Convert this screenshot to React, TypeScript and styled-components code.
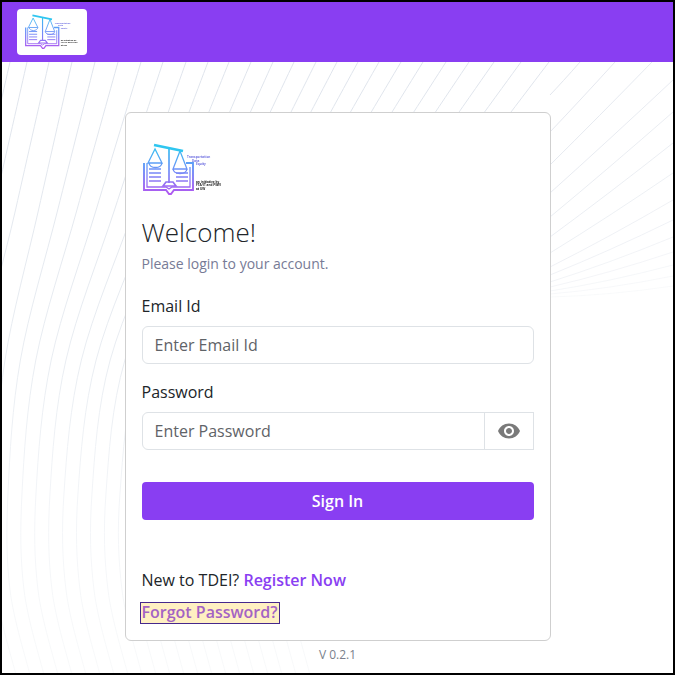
import styled, { createGlobalStyle } from "styled-components";

const GlobalStyle = createGlobalStyle`
  html, body {
    margin: 0;
    padding: 0;
    background: #000;
  }
  * {
    box-sizing: border-box;
  }
`;

const PURPLE = "#893ef2";

const TOP_STARTS = [
  -36, -13, 10, 27, 49, 72, 95, 118, 141, 163, 186, 208, 229, 251, 273, 294, 316, 337, 358, 379, 401, 423, 446, 469, 494,
  521, 549,
];

// smooth curve through points (catmull-rom turned into beziers)
function smoothPath(pts: number[][]) {
  let d = `M${pts[0][0]} ${pts[0][1]}`;
  for (let i = 0; i < pts.length - 1; i++) {
    const p0 = pts[Math.max(i - 1, 0)];
    const p1 = pts[i];
    const p2 = pts[i + 1];
    const p3 = pts[Math.min(i + 2, pts.length - 1)];
    const c1 = [p1[0] + (p2[0] - p0[0]) / 6, p1[1] + (p2[1] - p0[1]) / 6];
    const c2 = [p2[0] - (p3[0] - p1[0]) / 6, p2[1] - (p3[1] - p1[1]) / 6];
    d += ` C${c1[0]} ${c1[1]} ${c2[0]} ${c2[1]} ${p2[0]} ${p2[1]}`;
  }
  return d;
}

// the long contour lines: lean left, bulge at y~540, come back right at the bottom
function contourLine(x0: number, i: number) {
  const at360 = x0 - 67 - Math.max(0, x0 - 72) * 0.33;
  const at210 = x0 + (at360 - x0) * 0.5;
  const at493 = 8 + (i - 6) * 14;
  return smoothPath([
    [x0, 62],
    [at210, 210],
    [at360, 360],
    [at493, 493],
    [at493 + 2, 590],
    [at493 + 22, 675],
  ]);
}

const FAN_LINES = [
  [580, 62, 550, 95],
  [615, 62, 550, 132],
  [652, 62, 550, 165],
  [673, 80, 550, 193],
  [673, 112, 550, 217],
  [673, 143, 550, 237],
  [673, 173, 550, 253],
  [673, 200, 550, 267],
  [673, 220, 550, 275],
  [673, 237, 550, 282],
  [673, 252, 550, 287],
  [673, 265, 550, 291],
  [673, 276, 550, 294],
  [673, 286, 550, 297],
];

export default function App() {
  return (
    <Page>
      <GlobalStyle />
      <Background viewBox="0 0 675 675" aria-hidden="true">
        <defs>
          <linearGradient id="contour" gradientUnits="userSpaceOnUse" x1="0" y1="62" x2="0" y2="675">
            <stop offset="0" stopColor="#dfe4ec" />
            <stop offset="0.5" stopColor="#e9edf2" />
            <stop offset="0.72" stopColor="#f3f5f8" />
            <stop offset="1" stopColor="#f8f9fa" />
          </linearGradient>
        </defs>
        {TOP_STARTS.map((x0, i) => (
          <path key={x0} d={contourLine(x0, i)} stroke="url(#contour)" fill="none" />
        ))}
        {FAN_LINES.map(([x1, y1, x2, y2], i) => (
          <path
            key={i}
            d={`M${x1} ${y1} Q${(x1 + x2) / 2 - 3} ${(y1 + y2) / 2 + 4} ${x2} ${y2}`}
            stroke="#e3e7ee"
            strokeOpacity={1 - i * 0.06}
            fill="none"
          />
        ))}
      </Background>
      <Header>
        <LogoBox>
          <Logo width={54} />
        </LogoBox>
      </Header>
      <Main>
        <Card>
          <CardLogo>
            <Logo width={80} />
          </CardLogo>
          <Title>Welcome!</Title>
          <Subtitle>Please login to your account.</Subtitle>
          <Label>Email Id</Label>
          <Field>
            <Input placeholder="Enter Email Id" />
          </Field>
          <Label $gap>Password</Label>
          <Field>
            <Input placeholder="Enter Password" $joined />
            <EyeButton type="button" aria-label="Show password">
              <svg width="24" height="24" viewBox="0 0 24 24" fill="#7a7a7a">
                <path d="M12 4.5C7 4.5 2.73 7.61 1 12c1.73 4.39 6 7.5 11 7.5s9.27-3.11 11-7.5c-1.73-4.39-6-7.5-11-7.5zM12 17c-2.76 0-5-2.24-5-5s2.24-5 5-5 5 2.24 5 5-2.24 5-5 5zm0-8c-1.66 0-3 1.34-3 3s1.34 3 3 3 3-1.34 3-3-1.34-3-3-3z" />
              </svg>
            </EyeButton>
          </Field>
          <SignIn type="button">Sign In</SignIn>
          <Register>
            New to TDEI? <PurpleLink href="#">Register Now</PurpleLink>
          </Register>
          <Forgot href="#">Forgot Password?</Forgot>
        </Card>
        <Version>V 0.2.1</Version>
      </Main>
    </Page>
  );
}

function Logo({ width }: { width: number }) {
  return (
    <LogoSvg width={width} viewBox="0 0 80 54">
      <defs>
        <linearGradient id="logoGrad" gradientUnits="userSpaceOnUse" x1="0" y1="2" x2="0" y2="52">
          <stop offset="0" stopColor="#2fc6f0" />
          <stop offset="0.5" stopColor="#6f8ff8" />
          <stop offset="1" stopColor="#b455f0" />
        </linearGradient>
      </defs>
      <g fill="none" stroke="url(#logoGrad)" strokeWidth="1.9">
        <path d="M1 20v27h22l3 4h2l3-4h19V20h-7" />
        <path d="M4 20v24h19l3 2 3-2h18V24" strokeWidth="1.3" />
        <path d="M26 5v35M20 43l3-4h7l3 4z" strokeWidth="1.7" />
        <path d="M6 26h12M6 30h12M6 34h12M6 38h12M33 30h12M33 34h12M33 38h12" strokeWidth="1.4" />
        <path d="M12 6L5 20h14zM6 20c1 6 12 6 13 0" strokeWidth="1.3" />
        <path d="M37 8L30 26h14zM30 26c1 6 13 6 14 0" strokeWidth="1.3" />
      </g>
      <path d="M11 2l29 6" stroke="#2fc6f0" strokeWidth="2.8" fill="none" />
      <LogoText x="44" y="15" fill="#6f6fe0">
        Transportation
      </LogoText>
      <LogoText x="49" y="18.5" fill="#6f6fe0">
        Data
      </LogoText>
      <LogoText x="53" y="22" fill="#6f6fe0">
        Equity
      </LogoText>
      <LogoText x="53" y="40" fill="#222">
        an initiative by
      </LogoText>
      <LogoText x="53" y="43" fill="#222">
        FTA/IT and PSWI
      </LogoText>
      <LogoText x="53" y="47" fill="#222">
        at UW
      </LogoText>
    </LogoSvg>
  );
}

const Page = styled.div`
  position: relative;
  width: 675px;
  height: 675px;
  border: 2px solid #000;
  background: #fff;
  overflow: hidden;
  font-family: "Open Sans", "Noto Sans", sans-serif;
`;

const Background = styled.svg`
  position: absolute;
  left: -2px;
  top: -2px;
  width: 675px;
  height: 675px;
`;

const Header = styled.header`
  position: relative;
  display: flex;
  align-items: center;
  height: 60px;
  padding-left: 15px;
  background: ${PURPLE};
`;

const LogoBox = styled.div`
  display: flex;
  align-items: center;
  justify-content: center;
  width: 70px;
  height: 46px;
  border-radius: 4px;
  background: #fff;
`;

const LogoSvg = styled.svg`
  display: block;
  filter: blur(0.5px);
`;

const LogoText = styled.text`
  font-family: "Open Sans", sans-serif;
  font-size: 3.1px;
  font-weight: 700;
`;

const Main = styled.main`
  position: relative;
  display: flex;
  flex-direction: column;
  align-items: center;
  padding-top: 50px;
`;

const Card = styled.section`
  display: flex;
  flex-direction: column;
  align-items: flex-start;
  width: 426px;
  height: 529px;
  padding: 30px 16px 0;
  border: 1px solid #cfcfcf;
  border-radius: 6px;
  background: #fff;
`;

const CardLogo = styled.div`
  height: 58px;
  padding-left: 1px;
`;

const Title = styled.h1`
  margin: 14px 0 0;
  font-size: 26px;
  line-height: 34px;
  font-weight: 300;
  color: #212529;
`;

const Subtitle = styled.p`
  margin: 5px 0 0;
  font-size: 14px;
  line-height: 20px;
  color: #777b96;
`;

const Label = styled.label<{ $gap?: boolean }>`
  margin: ${({ $gap }) => ($gap ? "16px" : "20px")} 0 8px;
  font-size: 16px;
  line-height: 24px;
  font-weight: 400;
  color: #212529;
`;

const Field = styled.div`
  display: flex;
  width: 100%;
  height: 38px;
`;

const Input = styled.input<{ $joined?: boolean }>`
  flex: 1;
  min-width: 0;
  height: 38px;
  padding: 0 12px;
  border: 1px solid #dee2e6;
  border-radius: ${({ $joined }) => ($joined ? "6px 0 0 6px" : "6px")};
  background: #fff;
  font: 400 16px "Open Sans", sans-serif;
  &::placeholder {
    color: #5f6368;
    opacity: 1;
  }
`;

const EyeButton = styled.button`
  display: flex;
  align-items: center;
  justify-content: center;
  width: 50px;
  height: 38px;
  margin-left: -1px;
  padding: 0;
  border: 1px solid #dee2e6;
  background: #fff;
`;

const SignIn = styled.button`
  width: 100%;
  height: 38px;
  margin-top: 32px;
  border: 0;
  border-radius: 4px;
  background: ${PURPLE};
  color: #fff;
  font: 600 16px "Open Sans", sans-serif;
`;

const Register = styled.div`
  margin-top: 48px;
  font-size: 16px;
  line-height: 24px;
  color: #212529;
`;

const PurpleLink = styled.a`
  color: ${PURPLE};
  font-weight: 600;
  text-decoration: none;
`;

const Forgot = styled.a`
  margin: 11px 0 0 -1px;
  padding: 0 2px 2px 1px;
  font-size: 16px;
  line-height: 18px;
  font-weight: 600;
  color: #a463c4;
  background: #fff0c2;
  outline: 1px solid #46288c;
  text-decoration: none;
`;

const Version = styled.div`
  margin-top: 5px;
  font-size: 12px;
  line-height: 18px;
  color: #7a7f8c;
`;
